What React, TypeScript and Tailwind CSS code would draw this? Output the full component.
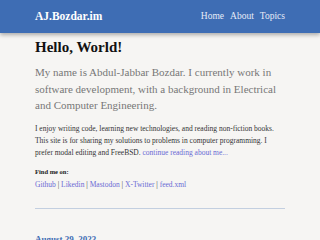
import React from "react";

export default function App() {
  const serif = { fontFamily: '"Liberation Serif", "Times New Roman", serif' };
  return (
    <div className="w-[320px] h-[240px] overflow-hidden bg-[#f6f5f3]" style={serif}>
      <header className="h-[33px] bg-[#3e6db4] shadow-[0_2px_4px_rgba(0,0,0,0.3)] flex items-center justify-between px-[35px]">
        <span className="text-white font-bold text-[11.5px]">AJ.Bozdar.im</span>
        <nav className="flex gap-[6px] text-[9.5px] text-[#e6ecf7]">
          <span>Home</span>
          <span>About</span>
          <span>Topics</span>
        </nav>
      </header>
      <main className="px-[35px]">
        <h1 className="mt-[4px] text-[15px] font-bold text-[#111] leading-[20px]">Hello, World!</h1>
        <p className="mt-[7px] text-[11px] leading-[16.7px] text-[#777]">
          My name is Abdul-Jabbar Bozdar. I currently work in software development, with a background in Electrical and Computer Engineering.
        </p>
        <p className="mt-[9px] text-[7.5px] leading-[12px] text-[#333]">
          I enjoy writing code, learning new technologies, and reading non-fiction books. This site is for sharing my solutions to problems in computer programming. I prefer modal editing and FreeBSD.{" "}
          <span className="text-[#6a6ad4]">continue reading about me...</span>
        </p>
        <p className="mt-[8px] text-[6.5px] font-bold text-[#222] leading-[10px]">Find me on:</p>
        <p className="mt-[2px] text-[7.5px] leading-[12px] text-[#444]">
          <span className="text-[#6a6ad4]">Github</span> | <span className="text-[#6a6ad4]">Likedin</span> | <span className="text-[#6a6ad4]">Mastodon</span> | <span className="text-[#6a6ad4]">X-Twitter</span> | <span className="text-[#6a6ad4]">feed.xml</span>
        </p>
        <div className="mt-[17px] h-px bg-[#c3cfe0]" />
        <p className="mt-[24px] text-[9px] font-bold text-[#3e6db4]">August 29, 2023</p>
      </main>
    </div>
  );
}
